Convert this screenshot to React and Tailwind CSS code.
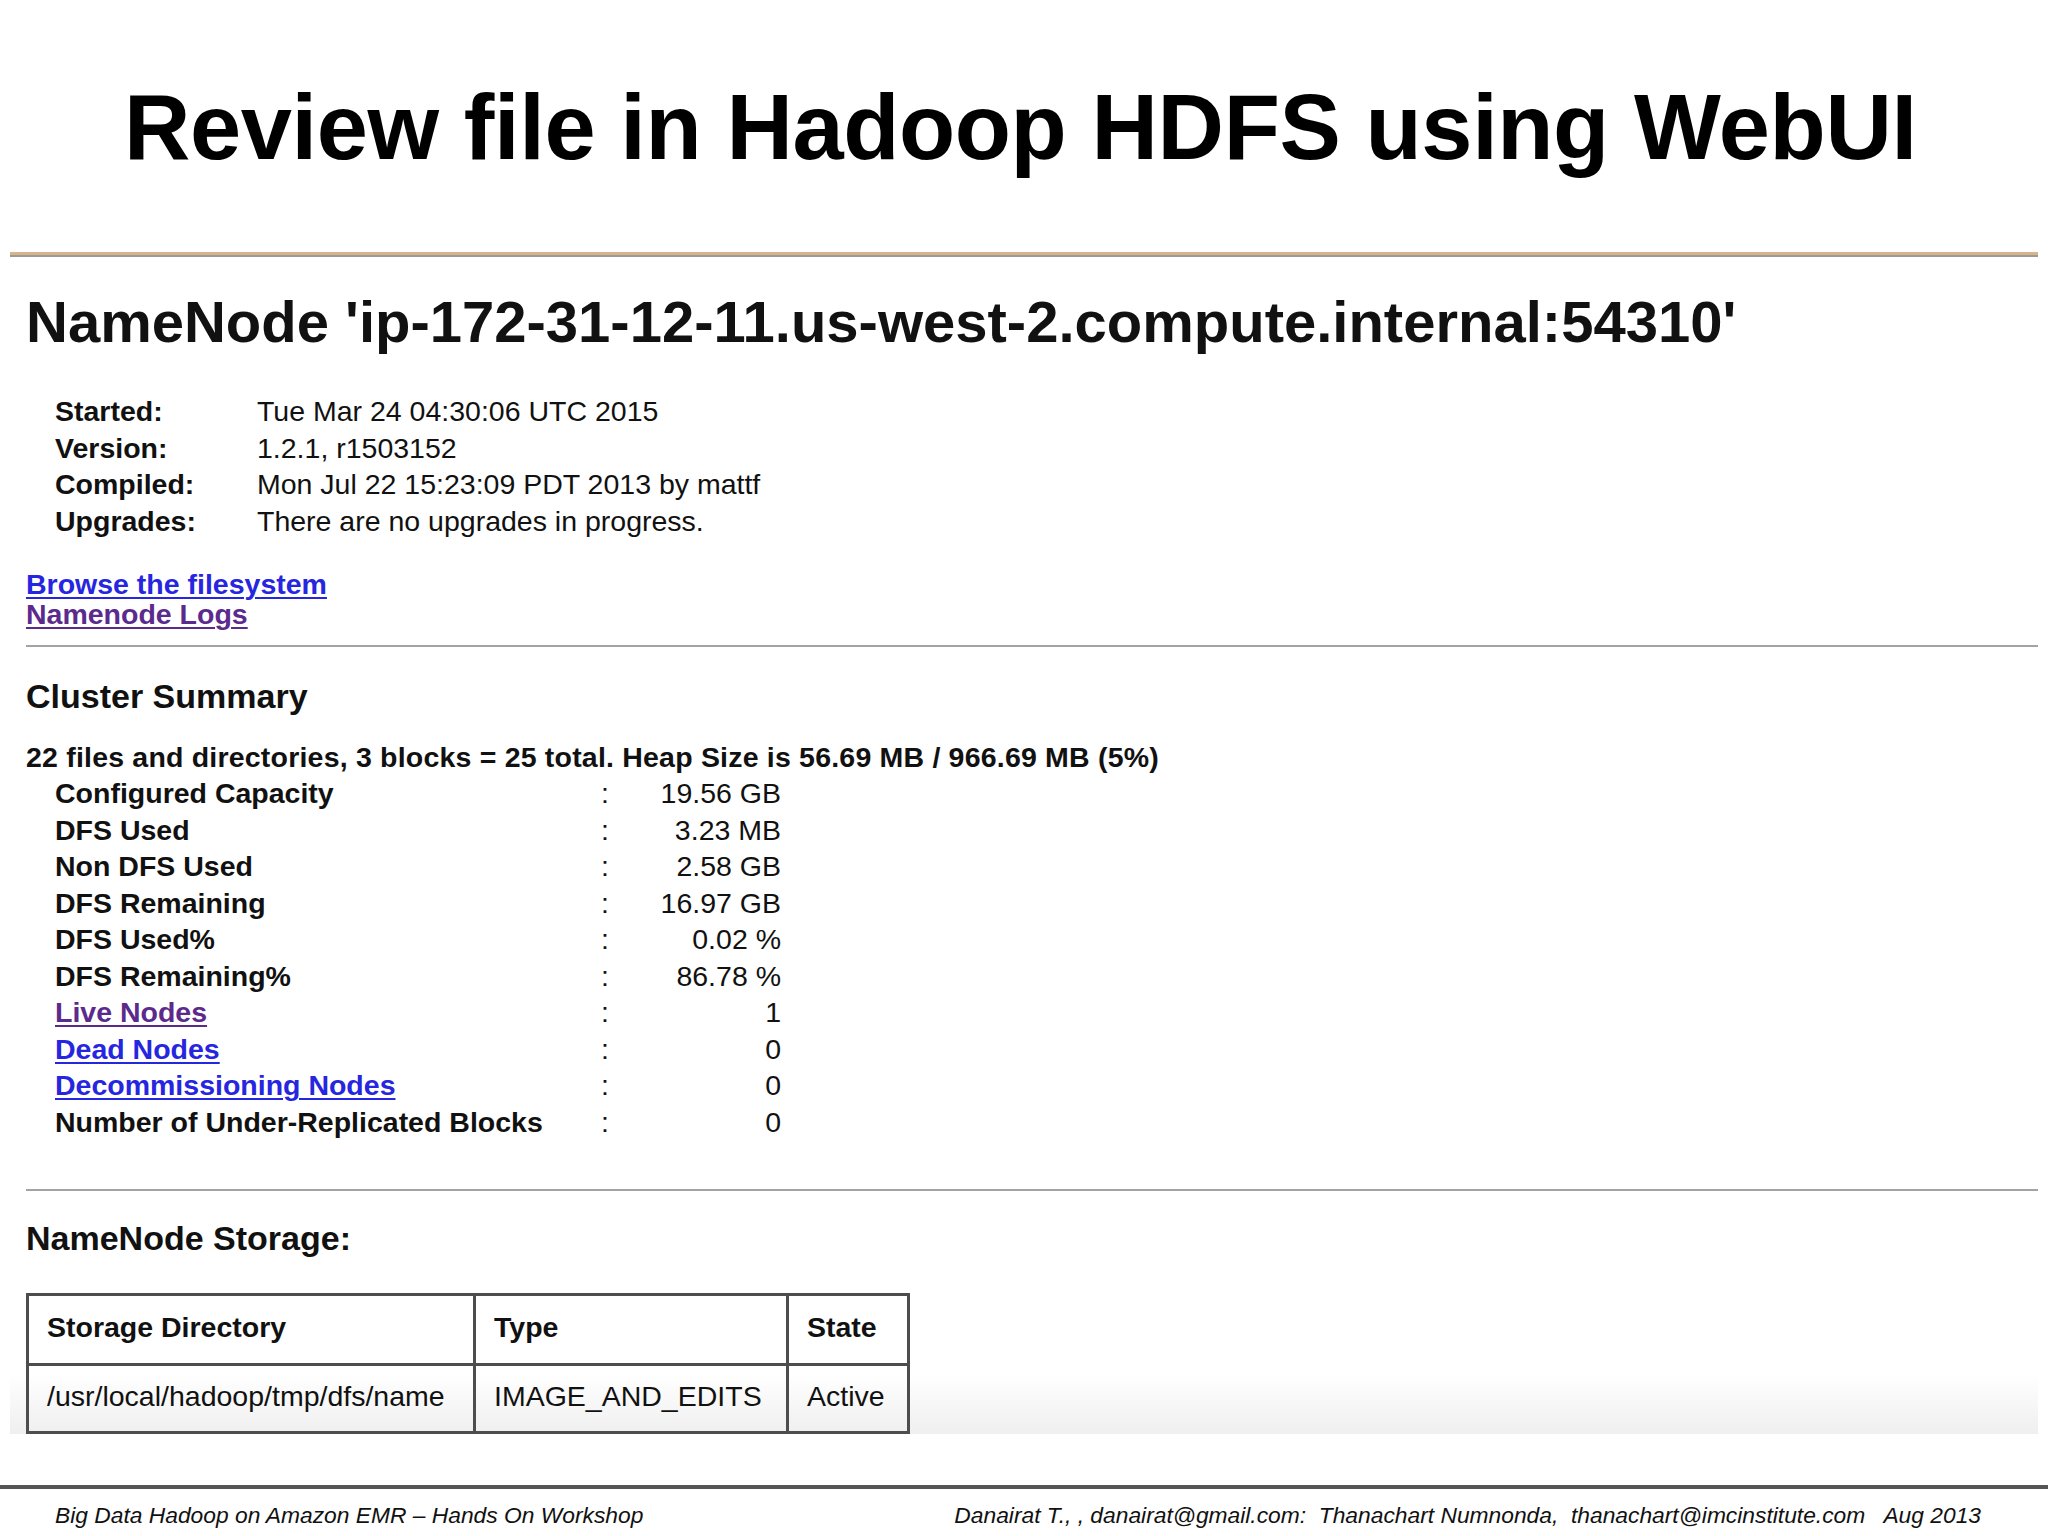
import React from 'react';

const info = [
  ['Started:', 'Tue Mar 24 04:30:06 UTC 2015'],
  ['Version:', '1.2.1, r1503152'],
  ['Compiled:', 'Mon Jul 22 15:23:09 PDT 2013 by mattf'],
  ['Upgrades:', 'There are no upgrades in progress.'],
];

// link: 'blue' | 'purple' | undefined
const summary = [
  { label: 'Configured Capacity', value: '19.56 GB' },
  { label: 'DFS Used', value: '3.23 MB' },
  { label: 'Non DFS Used', value: '2.58 GB' },
  { label: 'DFS Remaining', value: '16.97 GB' },
  { label: 'DFS Used%', value: '0.02 %' },
  { label: 'DFS Remaining%', value: '86.78 %' },
  { label: 'Live Nodes', value: '1', link: 'purple' },
  { label: 'Dead Nodes', value: '0', link: 'blue' },
  { label: 'Decommissioning Nodes', value: '0', link: 'blue' },
  { label: 'Number of Under-Replicated Blocks', value: '0' },
];

const linkClass = {
  blue: 'text-[#2626e0] underline decoration-2 underline-offset-[3px]',
  purple: 'text-[#5b2a8c] underline decoration-2 underline-offset-[3px]',
};

const App = () => {
  return (
    <div className="w-[2048px] h-[1536px] bg-white flex flex-col font-['Liberation_Sans',Arial,sans-serif] text-black overflow-hidden">
      {/* Slide title */}
      <h1 className="pt-[81px] pl-[124px] text-[92px] leading-[92px] font-bold tracking-[-0.4px] whitespace-nowrap">
        Review file in Hadoop HDFS using WebUI
      </h1>

      {/* Title rule */}
      <div className="mt-[79px] mx-[10px] h-[3px] bg-[#d8b489]" />
      <div className="mx-[10px] h-[2px] bg-[#9a9a9a]" />

      {/* Screenshot of the NameNode web UI */}
      <div className="mx-[10px] pl-[16px] text-[#111] bg-[linear-gradient(to_bottom,#ffffff_calc(100%-60px),#efefef)]">
        <h2 className="mt-[36px] text-[58px] leading-[58px] font-bold whitespace-nowrap">
          NameNode 'ip-172-31-12-11.us-west-2.compute.internal:54310'
        </h2>

        <div className="mt-[42px] pl-[29px] text-[28.5px] leading-[36.6px]">
          {info.map(([k, v]) => (
            <div key={k} className="flex">
              <span className="w-[202px] font-bold">{k}</span>
              <span>{v}</span>
            </div>
          ))}
        </div>

        <div className="mt-[30px] flex flex-col items-start text-[28.5px] leading-[30px] font-bold">
          <a className={linkClass.blue}>Browse the filesystem</a>
          <a className={linkClass.purple}>Namenode Logs</a>
        </div>

        <div className="mt-[16px] h-[2px] bg-[#a3a3a3]" />

        <h3 className="mt-[32px] text-[34px] leading-[34px] font-bold">Cluster Summary</h3>

        <div className="mt-[27px] text-[28.5px] leading-[35px] font-bold tracking-[0.2px] whitespace-nowrap">
          22 files and directories, 3 blocks = 25 total. Heap Size is 56.69 MB / 966.69 MB (5%)
        </div>

        <div className="pl-[29px] text-[28.5px] leading-[36.5px]">
          {summary.map((row) => (
            <div key={row.label} className="grid grid-cols-[546px_40px_140px]">
              <span className="font-bold whitespace-nowrap">
                {row.link ? <a className={linkClass[row.link]}>{row.label}</a> : row.label}
              </span>
              <span>:</span>
              <span className="text-right">{row.value}</span>
            </div>
          ))}
        </div>

        <div className="mt-[49px] h-[2px] bg-[#a3a3a3]" />

        <h3 className="mt-[30px] text-[34px] leading-[34px] font-bold">NameNode Storage:</h3>

        <table className="mt-[38px] border-collapse text-[28.5px]">
          <thead>
            <tr className="h-[70px]">
              <th className="w-[447px] border-[3px] border-[#4d4d4d] px-[18px] pb-[6px] text-left font-bold">Storage Directory</th>
              <th className="w-[313px] border-[3px] border-[#4d4d4d] px-[18px] pb-[6px] text-left font-bold">Type</th>
              <th className="w-[121px] border-[3px] border-[#4d4d4d] px-[18px] pb-[6px] text-left font-bold">State</th>
            </tr>
          </thead>
          <tbody>
            <tr className="h-[68px]">
              <td className="border-[3px] border-[#4d4d4d] px-[18px] pb-[6px] whitespace-nowrap">/usr/local/hadoop/tmp/dfs/name</td>
              <td className="border-[3px] border-[#4d4d4d] px-[18px] pb-[6px] whitespace-nowrap">IMAGE_AND_EDITS</td>
              <td className="border-[3px] border-[#4d4d4d] px-[18px] pb-[6px]">Active</td>
            </tr>
          </tbody>
        </table>
      </div>

      {/* Footer */}
      <div className="mt-[51px] h-[4px] bg-[#555555]" />
      <div className="mt-[11px] flex justify-between pl-[55px] pr-[67px] text-[22.8px] leading-[30px] italic text-[#111] whitespace-pre">
        <span>Big Data Hadoop on Amazon EMR – Hands On Workshop</span>
        <span>Danairat T., , danairat@gmail.com:  Thanachart Numnonda,  thanachart@imcinstitute.com   Aug 2013</span>
      </div>
    </div>
  );
};

export default App;
